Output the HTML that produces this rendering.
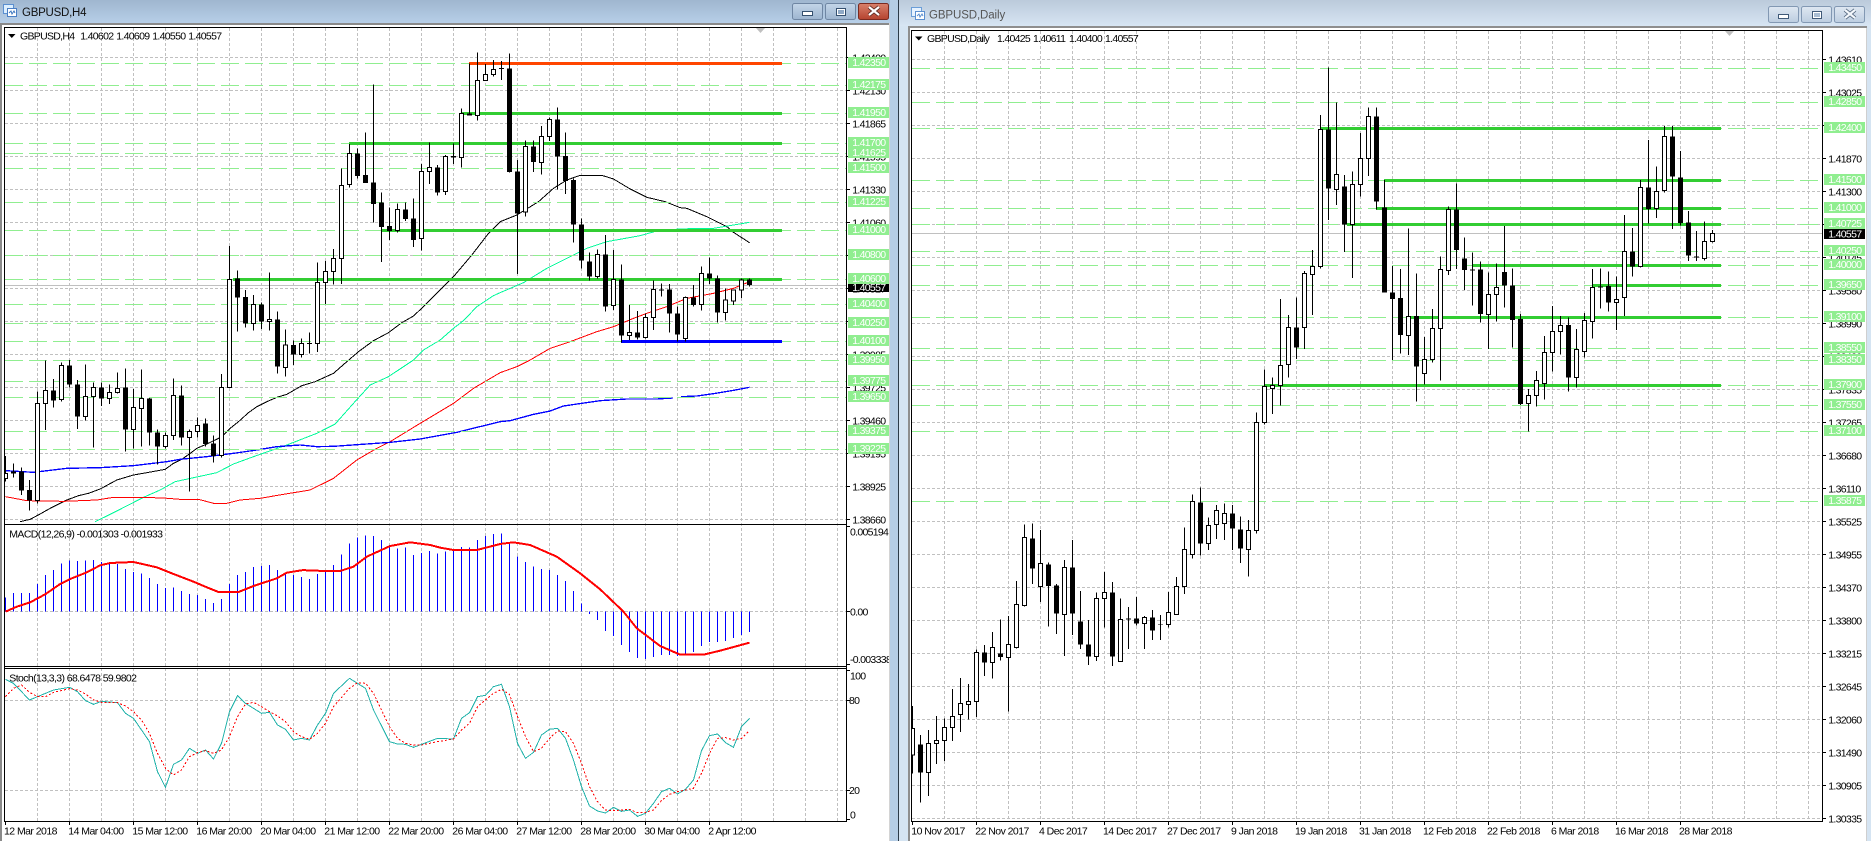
<!DOCTYPE html>
<html><head><meta charset="utf-8"><title>GBPUSD</title>
<style>
html,body{margin:0;padding:0;background:#fff;width:1871px;height:841px;overflow:hidden}
svg{display:block}
text{font-family:"Liberation Sans",sans-serif;font-size:10.5px;letter-spacing:-.7px;fill:#000}
.d{letter-spacing:-.55px}
.g{fill:#fff}
.grid{stroke:#c0c0c0;stroke-dasharray:3 2;fill:none}
.lv{stroke:#90ee90;stroke-dasharray:18 6;fill:none}
.c{shape-rendering:crispEdges}
</style></head><body>
<svg width="1871" height="841" viewBox="0 0 1871 841" xmlns="http://www.w3.org/2000/svg">
<defs>
<linearGradient id="tl" x1="0" y1="0" x2="0" y2="1"><stop offset="0" stop-color="#9fb6cf"/><stop offset="1" stop-color="#b7cfe8"/></linearGradient>
<linearGradient id="tr" x1="0" y1="0" x2="0" y2="1"><stop offset="0" stop-color="#bbcadb"/><stop offset="1" stop-color="#d7e5f3"/></linearGradient>
<linearGradient id="b1" x1="0" y1="0" x2="0" y2="1"><stop offset="0" stop-color="#c3d5e8"/><stop offset="1" stop-color="#9db5d0"/></linearGradient>
<linearGradient id="b2" x1="0" y1="0" x2="0" y2="1"><stop offset="0" stop-color="#dfe8f2"/><stop offset="1" stop-color="#bccde0"/></linearGradient>
<linearGradient id="cl" x1="0" y1="0" x2="0" y2="1"><stop offset="0" stop-color="#d9816c"/><stop offset="1" stop-color="#b5432f"/></linearGradient>
<clipPath id="cpl"><rect x="5" y="28" width="841" height="496"/></clipPath>
<clipPath id="cpr"><rect x="912" y="31" width="910" height="790"/></clipPath>
<clipPath id="ax"><rect x="848" y="525" width="41" height="145"/></clipPath>
</defs>
<!-- window backdrop -->
<rect width="1871" height="841" fill="#fff"/>
<rect x="0" y="0" width="890" height="23" fill="url(#tl)"/>
<rect x="0" y="23" width="890" height="2" fill="#8a8a8a"/>
<rect x="0" y="23" width="2" height="818" fill="#8a8a8a"/>
<rect x="889" y="23" width="2" height="818" fill="#d4d4d4"/>
<rect x="890" y="0" width="9" height="841" fill="#b5cde5"/>
<rect x="898" y="0" width="1" height="841" fill="#2c3a48"/>
<rect x="899" y="0" width="972" height="26" fill="url(#tr)"/>
<rect x="899" y="26" width="9" height="815" fill="#d5e4f2"/>
<rect x="908" y="26" width="963" height="2" fill="#8e8e8e"/>
<rect x="908" y="26" width="2" height="815" fill="#8e8e8e"/>
<rect x="1866" y="28" width="1" height="813" fill="#cfcfcf"/>
<rect x="1867" y="26" width="4" height="815" fill="#d5e4f2"/>

<!-- title icons and text -->
<g class="c"><rect x="3.5" y="4.5" width="10" height="9" fill="#dcefff" stroke="#5b8fd0"/><rect x="7.5" y="8.5" width="9" height="8" fill="#fff" stroke="#4a7fc5"/></g>
<path d="M9 13l2-2 1 3 2-3 1 2" fill="none" stroke="#3d78c0"/>
<text x="22" y="16" style="font-size:11.5px;letter-spacing:-.25px;fill:#111">GBPUSD,H4</text>
<g class="c"><rect x="911.5" y="7.5" width="10" height="9" fill="#e6f2ff" stroke="#6b9ed8"/><rect x="915.5" y="11.5" width="9" height="8" fill="#fff" stroke="#5b8fd0"/></g>
<path d="M917 16l2-2 1 3 2-3 1 2" fill="none" stroke="#5b8fd0"/>
<text x="929" y="18.500" style="font-size:11.5px;letter-spacing:-.1px;fill:#555">GBPUSD,Daily</text>

<!-- buttons -->
<rect x="792.500" y="3.500" width="30" height="16" rx="2" fill="url(#b1)" stroke="#6f86a3"/>
<rect x="802.500" y="11.500" width="10" height="4" fill="#fff" stroke="#35506f" class="c"/>
<rect x="825.500" y="3.500" width="30" height="16" rx="2" fill="url(#b1)" stroke="#6f86a3"/>
<rect x="836.500" y="8.500" width="9" height="7" fill="#fff" stroke="#35506f" class="c"/><rect x="838" y="10" width="6" height="4" fill="#8fa9c6" class="c"/>
<rect x="858.500" y="3.500" width="30" height="16" rx="2" fill="url(#cl)" stroke="#7a2a20"/>
<path d="M869 7l10 8M879 7l-10 8" stroke="#5c2a22" stroke-width="4"/><path d="M869 7l10 8M879 7l-10 8" stroke="#fff" stroke-width="2.2"/>
<rect x="1768.500" y="6.500" width="30" height="16" rx="2" fill="url(#b2)" stroke="#8298b3"/>
<rect x="1778.500" y="14.500" width="10" height="4" fill="#fff" stroke="#405a78" class="c"/>
<rect x="1801.500" y="6.500" width="30" height="16" rx="2" fill="url(#b2)" stroke="#8298b3"/>
<rect x="1812.500" y="11.500" width="9" height="7" fill="#fff" stroke="#405a78" class="c"/><rect x="1814" y="13" width="6" height="4" fill="#a9bdd3" class="c"/>
<rect x="1834.500" y="6.500" width="30" height="16" rx="2" fill="url(#b2)" stroke="#8298b3"/>
<path d="M1845 10l10 8M1855 10l-10 8" stroke="#55687f" stroke-width="4"/><path d="M1845 10l10 8M1855 10l-10 8" stroke="#f4f8fc" stroke-width="2.2"/>

<!-- LEFT CHART grid -->
<g class="c">
<path class="grid" d="M37.500 28V821M69.500 28V821M101.500 28V821M133.500 28V821M165.500 28V821M197.500 28V821M229.500 28V821M261.500 28V821M293.500 28V821M325.500 28V821M357.500 28V821M389.500 28V821M421.500 28V821M453.500 28V821M485.500 28V821M517.500 28V821M549.500 28V821M581.500 28V821M613.500 28V821M645.500 28V821M677.500 28V821M709.500 28V821M741.500 28V821M773.500 28V821M805.500 28V821M837.500 28V821"/>
<path class="grid" d="M5 57.500H846M5 90.500H846M5 123.500H846M5 156.500H846M5 189.500H846M5 222.500H846M5 255.500H846M5 288.500H846M5 321.500H846M5 354.500H846M5 387.500H846M5 420.500H846M5 453.500H846M5 486.500H846M5 519.500H846M5 611.500H846M5 700.500H846M5 790.500H846"/>
<path d="M5 285.500H846" stroke="#c0c0c0"/>
</g>
<!-- left MAs -->
<g clip-path="url(#cpl)"><g transform="scale(.33333) translate(.5,0)" fill="none" stroke-width="3" class="c">
<path stroke="#000" d="M60 1565L90 1558 120 1542 150 1525 180 1510 200 1500 235 1487 265 1480 300 1467 350 1440 400 1425 440 1418 495 1408 520 1390 545 1378 570 1360 590 1345 620 1332 645 1320 665 1310 690 1285 715 1265 745 1238 770 1220 800 1205 830 1192 860 1183 905 1157 945 1145 1000 1120 1040 1085 1075 1055 1120 1022 1165 998 1205 968 1240 948 1275 915 1360 830 1415 765 1465 700 1500 665 1550 645 1615 605 1660 565 1700 540 1740 526 1805 526 1840 537 1890 567 1940 592 1995 605 2040 623 2060 625 2120 650 2180 680 2200 697 2248 728"/>
<path stroke="#00fa9a" d="M285 1565L340 1538 430 1492 480 1470 525 1445 650 1418 700 1392 760 1370 860 1335 950 1300 1005 1272 1060 1210 1110 1155 1165 1130 1240 1080 1270 1050 1320 1020 1360 985 1390 962 1430 920 1480 887 1500 878 1570 848 1640 805 1720 765 1760 745 1820 725 1920 707 1980 690 2090 685 2140 685 2200 675 2248 667"/>
<path stroke="#f00" d="M16 1490L80 1502 190 1504 290 1500 340 1492 420 1492 490 1494 540 1498 595 1498 640 1510 680 1510 720 1500 780 1495 850 1483 930 1470 1000 1435 1070 1380 1130 1345 1170 1325 1260 1270 1360 1210 1420 1165 1500 1118 1550 1100 1590 1080 1650 1045 1710 1025 1790 995 1840 980 1900 955 1940 940 2000 920 2060 895 2140 880 2200 865 2248 845"/>
<path stroke="#00f" stroke-width="4" d="M16 1412L100 1417 200 1405 300 1403 400 1397 500 1385 540 1378 620 1370 700 1360 770 1350 830 1340 900 1335 950 1340 1000 1339 1100 1332 1170 1327 1260 1317 1370 1297 1500 1265 1530 1262 1600 1243 1650 1233 1690 1218 1800 1202 1880 1197 1970 1197 2018 1194M2043 1190L2090 1188 2140 1181 2200 1171 2248 1162"/>
</g></g>
<!-- left levels -->
<g class="c">
<path class="lv" d="M5 63.500H846M5 85.500H846M5 113.500H846M5 143.500H846M5 153.500H846M5 168.500H846M5 202.500H846M5 230.500H846M5 255.500H846M5 279.500H846M5 304.500H846M5 323.500H846M5 341.500H846M5 360.500H846M5 381.500H846M5 397.500H846M5 431.500H846M5 449.500H846"/>
<path stroke="#32cd32" stroke-width="3" d="M462 113.500H782M349 143.500H782M382 230.500H782M233 279.500H782"/>
<path stroke="#ff4500" stroke-width="3" d="M469 63.500H782"/>
<path stroke="#00f" stroke-width="3" d="M621 341.500H782"/>
</g>
<!-- left candles -->
<g clip-path="url(#cpl)"><g transform="scale(.33333) translate(.5,0)" class="c">
<path fill="none" stroke="#000" stroke-width="3" d="M16 1368V1445M40 1390V1432M64 1402V1485M88 1440V1532M112 1174V1510M136 1082V1290M160 1137V1223M184 1087V1205M208 1080V1163M232 1140V1287M256 1093V1262M280 1147V1343M304 1147V1218M328 1153V1212M352 1117V1180M376 1105V1355M400 1167V1346M424 1108V1340M448 1194V1337M472 1288V1393M496 1297V1345M520 1135V1320M544 1156V1337M568 1288V1475M592 1252V1313M616 1255V1340M640 1306V1388M664 1122V1372M688 738V1162M712 811V995M736 870V982M760 885V992M784 907V987M808 817V992M832 935V1120M856 988V1130M880 1022V1095M904 1015V1073M928 997V1060M952 787V1056M976 783V912M1000 747V853M1024 505V852M1048 432V562M1072 445V535M1096 397V549M1120 253V667M1144 577V786M1168 622V720M1192 610V698M1216 608V663M1240 595V741M1264 492V751M1288 427V552M1312 495V587M1336 465V585M1360 430V492M1384 325V503M1408 190V347M1432 157V362M1456 192V243M1480 180V230M1504 183V240M1528 160V518M1552 480V822M1576 422V650M1600 422V516M1624 378V524M1648 352V423M1672 322V568M1696 397V582M1720 535V728M1744 655V805M1768 757V842M1792 748V835M1816 705V935M1840 750V930M1864 793V1027M1888 915V1020M1912 933V1018M1936 940V1015M1960 842V990M1984 850V890M2008 852V998M2032 920V1025M2056 890V1025M2080 855V920M2104 800V932M2128 773V852M2152 826V968M2176 865V962M2200 868V915M2224 835V894M2248 835V860"/>
<path fill="none" stroke="#000" stroke-width="15" d="M40 1415V1421M64 1415V1472M88 1470V1502M160 1171V1202M208 1096V1154M232 1153V1250M304 1162V1196M376 1162V1289M448 1195V1298M472 1297V1340M544 1186V1313M616 1270V1332M640 1330V1368M712 835V893M736 891V970M784 913V965M832 958V1100M880 1035V1064M928 1029V1032M1072 460V528M1096 525V549M1120 547V612M1144 607V681M1168 678V693M1216 628V657M1240 655V720M1312 502V578M1360 468V473M1408 340V347M1504 204V207M1528 205V516M1552 514V640M1600 439V486M1672 358V470M1696 468V543M1720 540V674M1744 673V782M1768 784V830M1816 763V920M1864 838V1007M1912 997V1013M1984 868V872M2008 868V940M2032 940V1003M2080 892V915M2128 820V836M2152 835V938M2248 838V855"/>
<path fill="#fff" stroke="#000" stroke-width="3" d="M10 1420h12v15h-12zM106 1210h12v292h-12zM130 1171h12v39h-12zM178 1096h12v102h-12zM250 1189h12v61h-12zM274 1163h12v26h-12zM322 1178h12v17h-12zM346 1166h12v12h-12zM394 1222h12v67h-12zM418 1195h12v30h-12zM490 1306h12v33h-12zM514 1186h12v120h-12zM562 1295h12v17h-12zM586 1277h12v18h-12zM658 1162h12v204h-12zM682 838h12v324h-12zM754 913h12v57h-12zM802 958h12v7h-12zM850 1035h12v67h-12zM898 1030h12v34h-12zM946 847h12v183h-12zM970 814h12v34h-12zM994 775h12v40h-12zM1018 556h12v220h-12zM1042 460h12v94h-12zM1186 628h12v64h-12zM1258 514h12v202h-12zM1282 502h12v12h-12zM1330 469h12v106h-12zM1378 340h12v132h-12zM1426 241h12v105h-12zM1450 223h12v18h-12zM1474 208h12v15h-12zM1570 439h12v197h-12zM1618 409h12v79h-12zM1642 358h12v51h-12zM1786 763h12v67h-12zM1834 838h12v79h-12zM1882 997h12v10h-12zM1930 952h12v61h-12zM1954 868h12v84h-12zM2050 892h12v124h-12zM2098 820h12v93h-12zM2170 900h12v37h-12zM2194 870h12v33h-12zM2218 840h12v30h-12z"/>
</g></g>
<!-- MACD + Stoch -->
<g transform="scale(.33333) translate(.5,0)" fill="none" class="c">
<path stroke="#00f" stroke-width="3" d="M16 1835V1792M40 1835V1779M64 1835V1779M88 1835V1779M112 1835V1752M136 1835V1725M160 1835V1710M184 1835V1690M208 1835V1681M232 1835V1683M256 1835V1682M280 1835V1680M304 1835V1686M328 1835V1690M352 1835V1692M376 1835V1707M400 1835V1716M424 1835V1720M448 1835V1734M472 1835V1752M496 1835V1764M520 1835V1762M544 1835V1773M568 1835V1782M592 1835V1785M616 1835V1797M640 1835V1809M664 1835V1797M688 1835V1752M712 1835V1725M736 1835V1716M760 1835V1701M784 1835V1698M808 1835V1695M832 1835V1710M856 1835V1720M880 1835V1725M904 1835V1731M928 1835V1737M952 1835V1722M976 1835V1713M1000 1835V1695M1024 1835V1663M1048 1835V1630M1072 1835V1613M1096 1835V1606M1120 1835V1608M1144 1835V1620M1168 1835V1635M1192 1835V1645M1216 1835V1643M1240 1835V1665M1264 1835V1659M1288 1835V1653M1312 1835V1660M1336 1835V1655M1360 1835V1652M1384 1835V1641M1408 1835V1643M1432 1835V1620M1456 1835V1608M1480 1835V1602M1504 1835V1600M1528 1835V1630M1552 1835V1670M1576 1835V1686M1600 1835V1700M1624 1835V1707M1648 1835V1710M1672 1835V1725M1696 1835V1743M1720 1835V1773M1744 1835V1811M1768 1835V1842M1792 1835V1860M1816 1835V1893M1840 1835V1908M1864 1835V1935M1888 1835V1956M1912 1835V1974M1936 1835V1977M1960 1835V1971M1984 1835V1965M2008 1835V1965M2032 1835V1968M2056 1835V1965M2080 1835V1956M2104 1835V1938M2128 1835V1926M2152 1835V1926M2176 1835V1923M2200 1835V1914M2224 1835V1905M2248 1835V1896"/>
<path stroke="#f00" stroke-width="6" d="M16 1835L50 1820 90 1807 135 1783 180 1752 215 1735 260 1717 300 1696 330 1689 400 1686 470 1702 520 1722 580 1745 620 1762 655 1776 715 1776 760 1758 830 1735 860 1718 910 1710 930 1712 1020 1713 1060 1700 1100 1670 1170 1638 1230 1627 1290 1635 1320 1643 1360 1650 1430 1650 1500 1632 1540 1627 1590 1635 1670 1670 1705 1695 1740 1720 1800 1768 1870 1835 1910 1885 1980 1938 2040 1964 2110 1964 2160 1952 2248 1928"/>
<path stroke="#20b2aa" stroke-width="3" d="M16 2038L40 2050 88 2100 136 2080 160 2070 208 2062 232 2075 256 2102 280 2113 304 2104 352 2108 376 2140 400 2155 448 2225 472 2315 496 2362 520 2293 544 2280 568 2245 592 2260 616 2250 640 2277 664 2230 688 2135 712 2087 736 2110 784 2140 808 2137 832 2175 856 2188 880 2220 904 2215 928 2220 952 2175 976 2140 1000 2080 1048 2035 1096 2065 1120 2130 1168 2225 1192 2232 1216 2233 1240 2242 1264 2233 1312 2215 1360 2217 1384 2155 1408 2138 1432 2090 1456 2086 1480 2060 1504 2053 1528 2120 1552 2230 1576 2275 1600 2257 1624 2205 1648 2188 1672 2185 1696 2215 1720 2280 1744 2360 1768 2418 1792 2433 1816 2439 1840 2422 1864 2434 1888 2430 1912 2449 1936 2440 1960 2410 1984 2375 2008 2365 2032 2382 2056 2368 2080 2340 2104 2252 2128 2207 2152 2202 2176 2228 2200 2242 2224 2180 2248 2155"/>
<path stroke="#f00" stroke-width="3" stroke-dasharray="6 6" d="M16 2090L40 2065 64 2055 88 2077 112 2090 136 2090 160 2077 208 2066 232 2070 256 2082 280 2100 304 2107 352 2108 376 2118 400 2135 424 2160 448 2200 472 2260 496 2305 520 2325 544 2310 568 2270 592 2258 616 2252 640 2260 664 2250 688 2210 712 2150 736 2112 760 2107 784 2120 808 2135 832 2148 856 2165 880 2195 904 2210 928 2218 952 2200 976 2170 1000 2120 1048 2065 1072 2048 1096 2050 1120 2080 1144 2130 1168 2180 1192 2215 1216 2230 1240 2235 1264 2235 1312 2225 1360 2217 1384 2190 1408 2170 1432 2120 1456 2100 1480 2080 1504 2068 1528 2083 1552 2150 1576 2210 1600 2255 1624 2245 1648 2215 1672 2193 1696 2195 1720 2230 1744 2290 1768 2360 1792 2405 1816 2430 1840 2432 1864 2430 1888 2428 1912 2438 1936 2437 1960 2430 1984 2402 2008 2383 2032 2375 2056 2370 2080 2365 2104 2320 2128 2260 2152 2215 2176 2213 2200 2220 2224 2215 2248 2192"/>
</g>
<!-- left frames -->
<g class="c" fill="none" stroke="#000">
<path d="M4.500 27.500H846.500V821.500H4.500Z"/>
<path d="M4.500 524.500H846.500M4.500 666.500H846.500M4.500 668.500H846.500"/>
<path d="M847 57.500h3M847 90.500h3M847 123.500h3M847 156.500h3M847 189.500h3M847 222.500h3M847 255.500h3M847 288.500h3M847 321.500h3M847 354.500h3M847 387.500h3M847 420.500h3M847 453.500h3M847 486.500h3M847 519.500h3M847 526.500h3M847 611.500h3M847 664.500h3M847 670.500h3M847 700.500h3M847 790.500h3M847 819.500h3"/>
<path d="M5.500 821v4M69.500 821v4M133.500 821v4M197.500 821v4M261.500 821v4M325.500 821v4M389.500 821v4M453.500 821v4M517.500 821v4M581.500 821v4M645.500 821v4M709.500 821v4"/>
</g>
<path d="M756 28h9l-4.500 5z" fill="#c0c0c0"/>
<path d="M8 34h7.500l-3.700 4z" fill="#000"/>
<text x="20" y="39.500">GBPUSD,H4</text><text x="80.300" y="39.500">1.40602</text><text x="116.300" y="39.500">1.40609</text><text x="152.300" y="39.500">1.40550</text><text x="188.300" y="39.500">1.40557</text>
<text x="9.300" y="537.500" textLength="153" lengthAdjust="spacing">MACD(12,26,9) -0.001303 -0.001933</text>
<text x="9.300" y="681.500" textLength="127" lengthAdjust="spacing">Stoch(13,3,3) 68.6478 59.9802</text>
<!-- left axis -->
<g>
<text x="852.300" y="61.500">1.42400</text><text x="852.300" y="94.500">1.42130</text><text x="852.300" y="127.500">1.41865</text><text x="852.300" y="160.500">1.41595</text><text x="852.300" y="193.500">1.41330</text><text x="852.300" y="226.500">1.41060</text><text x="852.300" y="259.500">1.40795</text><text x="852.300" y="292.500">1.40527</text><text x="852.300" y="325.500">1.40260</text><text x="852.300" y="358.500">1.39985</text><text x="852.300" y="391.500">1.39725</text><text x="852.300" y="424.500">1.39460</text><text x="852.300" y="457.500">1.39195</text><text x="852.300" y="490.500">1.38925</text><text x="852.300" y="523.500">1.38660</text>
<g clip-path="url(#ax)"><text x="850" y="535.500">0.005194</text><text x="850" y="615.500">0.00</text><text x="850" y="663">-0.003338</text></g>
<text x="850" y="679.500">100</text><text x="849" y="704">80</text><text x="849" y="794">20</text><text x="850" y="818.500">0</text>
</g>
<rect x="848" y="284" width="41" height="8" fill="#000"/><text class="g" x="852.300" y="291">1.40557</text>
<g fill="#90ee90"><rect x="848" y="57" width="41" height="11"/><rect x="848" y="79" width="41" height="11"/><rect x="848" y="107" width="41" height="11"/><rect x="848" y="137" width="41" height="11"/><rect x="848" y="147" width="41" height="11"/><rect x="848" y="162" width="41" height="11"/><rect x="848" y="196" width="41" height="11"/><rect x="848" y="224" width="41" height="11"/><rect x="848" y="249" width="41" height="11"/><rect x="848" y="273" width="41" height="11"/><rect x="848" y="298" width="41" height="11"/><rect x="848" y="317" width="41" height="11"/><rect x="848" y="335" width="41" height="11"/><rect x="848" y="354" width="41" height="11"/><rect x="848" y="375" width="41" height="11"/><rect x="848" y="391" width="41" height="11"/><rect x="848" y="425" width="41" height="11"/><rect x="848" y="443" width="41" height="11"/></g>
<text class="g" x="852.300" y="66">1.42350</text><text class="g" x="852.300" y="88">1.42175</text><text class="g" x="852.300" y="116">1.41950</text><text class="g" x="852.300" y="146">1.41700</text><text class="g" x="852.300" y="156">1.41625</text><text class="g" x="852.300" y="171">1.41500</text><text class="g" x="852.300" y="205">1.41225</text><text class="g" x="852.300" y="233">1.41000</text><text class="g" x="852.300" y="258">1.40800</text><text class="g" x="852.300" y="282">1.40600</text><text class="g" x="852.300" y="307">1.40400</text><text class="g" x="852.300" y="326">1.40250</text><text class="g" x="852.300" y="344">1.40100</text><text class="g" x="852.300" y="363">1.39950</text><text class="g" x="852.300" y="384">1.39775</text><text class="g" x="852.300" y="400">1.39650</text><text class="g" x="852.300" y="434">1.39375</text><text class="g" x="852.300" y="452">1.39225</text>
<text class="d" x="4" y="834.500">12 Mar 2018</text><text class="d" x="68.300" y="834.500">14 Mar 04:00</text><text class="d" x="132.300" y="834.500">15 Mar 12:00</text><text class="d" x="196.300" y="834.500">16 Mar 20:00</text><text class="d" x="260.300" y="834.500">20 Mar 04:00</text><text class="d" x="324.300" y="834.500">21 Mar 12:00</text><text class="d" x="388.300" y="834.500">22 Mar 20:00</text><text class="d" x="452.300" y="834.500">26 Mar 04:00</text><text class="d" x="516.300" y="834.500">27 Mar 12:00</text><text class="d" x="580.300" y="834.500">28 Mar 20:00</text><text class="d" x="644.300" y="834.500">30 Mar 04:00</text><text class="d" x="708.300" y="834.500">2 Apr 12:00</text>

<!-- RIGHT CHART -->
<g class="c">
<path class="grid" d="M944.500 31V821M976.500 31V821M1008.500 31V821M1040.500 31V821M1072.500 31V821M1104.500 31V821M1136.500 31V821M1168.500 31V821M1200.500 31V821M1232.500 31V821M1264.500 31V821M1296.500 31V821M1328.500 31V821M1360.500 31V821M1392.500 31V821M1424.500 31V821M1456.500 31V821M1488.500 31V821M1520.500 31V821M1552.500 31V821M1584.500 31V821M1616.500 31V821M1648.500 31V821M1680.500 31V821M1712.500 31V821M1744.500 31V821M1776.500 31V821M1808.500 31V821"/>
<path class="grid" d="M912 59.500H1822M912 92.500H1822M912 125.500H1822M912 158.500H1822M912 191.500H1822M912 224.500H1822M912 257.500H1822M912 290.500H1822M912 323.500H1822M912 356.500H1822M912 389.500H1822M912 422.500H1822M912 455.500H1822M912 488.500H1822M912 521.500H1822M912 554.500H1822M912 587.500H1822M912 620.500H1822M912 653.500H1822M912 686.500H1822M912 719.500H1822M912 752.500H1822M912 785.500H1822M912 818.500H1822"/>
<path d="M912 233.500H1822" stroke="#c0c0c0"/>
<path class="lv" d="M912 68.500H1822M912 102.500H1822M912 128.500H1822M912 180.500H1822M912 208.500H1822M912 224.500H1822M912 251.500H1822M912 265.500H1822M912 285.500H1822M912 317.500H1822M912 348.500H1822M912 360.500H1822M912 385.500H1822M912 405.500H1822M912 431.500H1822M912 501.500H1822"/>
<path stroke="#32cd32" stroke-width="3" d="M1320 128.500H1721M1384 180.500H1721M1376 208.500H1721M1347 224.500H1721M1473 265.500H1721M1593 285.500H1721M1411 317.500H1721M1265 385.500H1721"/>
</g>
<g clip-path="url(#cpr)"><g transform="scale(.33333) translate(.5,0)" class="c">
<path fill="none" stroke="#000" stroke-width="3" d="M2737 2118V2320M2761 2205V2408M2785 2190V2388M2809 2148V2292M2833 2155V2283M2857 2067V2223M2881 2034V2196M2905 2052V2158M2929 1948V2151M2953 1935V2028M2977 1896V2036M3001 1858V1982M3025 1848V2135M3049 1743V1945M3073 1573V1820M3097 1570V1752M3121 1590V1806M3145 1687V1880M3169 1752V1902M3193 1680V1968M3217 1620V1905M3241 1773V1947M3265 1860V1995M3289 1777V1983M3313 1716V1883M3337 1746V1998M3361 1795V1985M3385 1821V1947M3409 1791V1877M3433 1848V1947M3457 1830V1920M3481 1845V1920M3505 1776V1883M3529 1731V1845M3553 1582V1782M3577 1483V1676M3601 1462V1667M3625 1552V1650M3649 1515V1617M3673 1510V1620M3697 1515V1650M3721 1550V1689M3745 1560V1730M3769 1237V1601M3793 1108V1273M3817 1132V1242M3841 897V1217M3865 945V1133M3889 892V1077M3913 813V1047M3937 750V945M3961 345V805M3985 203V660M4009 307V615M4033 525V756M4057 514V834M4081 399V590M4105 322V528M4129 322V628M4153 540V878M4177 798V1080M4201 807V1060M4225 685V1065M4249 820V1205M4273 1011V1153M4297 927V1088M4321 770V1142M4345 620V825M4369 550V807M4393 712V870M4417 758V917M4441 785V967M4465 817V1047M4489 790V965M4513 678V922M4537 805V1043M4561 942V1215M4585 1167V1295M4609 1113V1220M4633 1008V1199M4657 918V1115M4681 948V1064M4705 952V1175M4729 987V1163M4753 939V1073M4777 807V1016M4801 805V925M4825 815V935M4849 830V990M4873 645V948M4897 684V830M4921 540V803M4945 420V670M4969 500V654M4993 378V578M5017 378V687M5041 453V677M5065 633V783M5089 693V783M5113 664V782M5137 690V727"/>
<path fill="none" stroke="#000" stroke-width="15" d="M2761 2233V2318M2953 1957V1988M3001 1960V1971M3097 1615V1706M3145 1693V1758M3169 1756V1841M3217 1702V1841M3241 1864V1934M3265 1933V1970M3337 1777V1970M3385 1855V1859M3409 1855V1871M3457 1852V1892M3481 1873V1875M3601 1507V1631M3697 1540V1586M3721 1588V1646M3889 982V1043M3985 388V566M4033 559V674M4129 349V605M4153 622V878M4177 877V897M4201 894V1005M4249 948V1100M4369 628V750M4393 775V810M4417 808V812M4441 808V942M4513 816V857M4537 856V960M4561 957V1212M4705 975V1133M4801 859V863M4825 858V908M4897 754V800M4945 562V627M5017 409V530M5041 532V669M5065 667V767M5089 769V772"/>
<path fill="#fff" stroke="#000" stroke-width="3" d="M2731 2185h12v80h-12zM2779 2230h12v88h-12zM2803 2221h12v9h-12zM2827 2182h12v39h-12zM2851 2149h12v33h-12zM2875 2110h12v34h-12zM2899 2104h12v9h-12zM2923 1957h12v148h-12zM2971 1942h12v46h-12zM3019 1933h12v39h-12zM3043 1813h12v130h-12zM3067 1612h12v205h-12zM3115 1690h12v70h-12zM3187 1702h12v142h-12zM3283 1795h12v174h-12zM3307 1777h12v18h-12zM3355 1858h12v126h-12zM3427 1852h12v18h-12zM3499 1837h12v36h-12zM3523 1759h12v84h-12zM3547 1648h12v111h-12zM3571 1504h12v159h-12zM3619 1576h12v55h-12zM3643 1531h12v42h-12zM3667 1540h12v30h-12zM3739 1591h12v57h-12zM3763 1267h12v324h-12zM3787 1159h12v108h-12zM3811 1157h12v8h-12zM3835 1096h12v61h-12zM3859 982h12v111h-12zM3907 820h12v162h-12zM3931 799h12v24h-12zM3955 388h12v412h-12zM4003 523h12v46h-12zM4051 553h12v121h-12zM4075 475h12v78h-12zM4099 349h12v126h-12zM4219 949h12v58h-12zM4267 1078h12v42h-12zM4291 985h12v93h-12zM4315 808h12v177h-12zM4339 628h12v184h-12zM4459 883h12v60h-12zM4483 862h12v21h-12zM4579 1186h12v25h-12zM4603 1141h12v46h-12zM4627 1057h12v94h-12zM4651 994h12v63h-12zM4675 976h12v18h-12zM4723 1048h12v85h-12zM4747 962h12v92h-12zM4771 862h12v103h-12zM4843 898h12v9h-12zM4867 754h12v138h-12zM4915 562h12v238h-12zM4963 574h12v52h-12zM4987 409h12v163h-12zM5107 724h12v52h-12zM5131 700h12v24h-12z"/>
</g></g>
<g class="c" fill="none" stroke="#000">
<path d="M911.500 30.500H1822.500V821.500H911.500Z"/>
<path d="M1823 59.500h3M1823 92.500h3M1823 125.500h3M1823 158.500h3M1823 191.500h3M1823 224.500h3M1823 257.500h3M1823 290.500h3M1823 323.500h3M1823 356.500h3M1823 389.500h3M1823 422.500h3M1823 455.500h3M1823 488.500h3M1823 521.500h3M1823 554.500h3M1823 587.500h3M1823 620.500h3M1823 653.500h3M1823 686.500h3M1823 719.500h3M1823 752.500h3M1823 785.500h3M1823 818.500h3"/>
<path d="M912.500 821v4M976.500 821v4M1040.500 821v4M1104.500 821v4M1168.500 821v4M1232.500 821v4M1296.500 821v4M1360.500 821v4M1424.500 821v4M1488.500 821v4M1552.500 821v4M1616.500 821v4M1680.500 821v4"/>
</g>
<path d="M1725 31h9l-4.500 5z" fill="#c0c0c0"/>
<path d="M915 36.500h7.500l-3.700 4z" fill="#000"/>
<text x="927" y="42">GBPUSD,Daily</text><text x="997" y="42">1.40425</text><text x="1033" y="42">1.40611</text><text x="1069" y="42">1.40400</text><text x="1105" y="42">1.40557</text>
<g>
<text x="1828.300" y="63.500">1.43610</text><text x="1828.300" y="96.500">1.43025</text><text x="1828.300" y="129.500">1.42445</text><text x="1828.300" y="162.500">1.41870</text><text x="1828.300" y="195.500">1.41300</text><text x="1828.300" y="228.500">1.40725</text><text x="1828.300" y="261.500">1.40145</text><text x="1828.300" y="294.500">1.39580</text><text x="1828.300" y="327.500">1.38990</text><text x="1828.300" y="360.500">1.38420</text><text x="1828.300" y="393.500">1.37835</text><text x="1828.300" y="426.500">1.37265</text><text x="1828.300" y="459.500">1.36680</text><text x="1828.300" y="492.500">1.36110</text><text x="1828.300" y="525.500">1.35525</text><text x="1828.300" y="558.500">1.34955</text><text x="1828.300" y="591.500">1.34370</text><text x="1828.300" y="624.500">1.33800</text><text x="1828.300" y="657.500">1.33215</text><text x="1828.300" y="690.500">1.32645</text><text x="1828.300" y="723.500">1.32060</text><text x="1828.300" y="756.500">1.31490</text><text x="1828.300" y="789.500">1.30905</text><text x="1828.300" y="822.500">1.30335</text>
</g>
<g fill="#90ee90"><rect x="1824" y="62" width="41" height="11"/><rect x="1824" y="96" width="41" height="11"/><rect x="1824" y="122" width="41" height="11"/><rect x="1824" y="174" width="41" height="11"/><rect x="1824" y="202" width="41" height="11"/><rect x="1824" y="218" width="41" height="11"/><rect x="1824" y="245" width="41" height="11"/><rect x="1824" y="259" width="41" height="11"/><rect x="1824" y="279" width="41" height="11"/><rect x="1824" y="311" width="41" height="11"/><rect x="1824" y="342" width="41" height="11"/><rect x="1824" y="354" width="41" height="11"/><rect x="1824" y="379" width="41" height="11"/><rect x="1824" y="399" width="41" height="11"/><rect x="1824" y="425" width="41" height="11"/><rect x="1824" y="495" width="41" height="11"/></g>
<rect x="1824" y="229" width="41" height="10" fill="#000"/><text class="g" x="1828.300" y="237.500">1.40557</text>
<text class="g" x="1828.300" y="71">1.43450</text><text class="g" x="1828.300" y="105">1.42850</text><text class="g" x="1828.300" y="131">1.42400</text><text class="g" x="1828.300" y="183">1.41500</text><text class="g" x="1828.300" y="211">1.41000</text><text class="g" x="1828.300" y="227">1.40725</text><text class="g" x="1828.300" y="254">1.40250</text><text class="g" x="1828.300" y="268">1.40000</text><text class="g" x="1828.300" y="288">1.39650</text><text class="g" x="1828.300" y="320">1.39100</text><text class="g" x="1828.300" y="351">1.38550</text><text class="g" x="1828.300" y="363">1.38350</text><text class="g" x="1828.300" y="388">1.37900</text><text class="g" x="1828.300" y="408">1.37550</text><text class="g" x="1828.300" y="434">1.37100</text><text class="g" x="1828.300" y="504">1.35875</text>
<text class="d" x="911.300" y="834.500">10 Nov 2017</text><text class="d" x="975.300" y="834.500">22 Nov 2017</text><text class="d" x="1039" y="834.500">4 Dec 2017</text><text class="d" x="1103" y="834.500">14 Dec 2017</text><text class="d" x="1167" y="834.500">27 Dec 2017</text><text class="d" x="1231" y="834.500">9 Jan 2018</text><text class="d" x="1295" y="834.500">19 Jan 2018</text><text class="d" x="1359" y="834.500">31 Jan 2018</text><text class="d" x="1423" y="834.500">12 Feb 2018</text><text class="d" x="1487" y="834.500">22 Feb 2018</text><text class="d" x="1551" y="834.500">6 Mar 2018</text><text class="d" x="1615" y="834.500">16 Mar 2018</text><text class="d" x="1679" y="834.500">28 Mar 2018</text>
</svg>
</body></html>
